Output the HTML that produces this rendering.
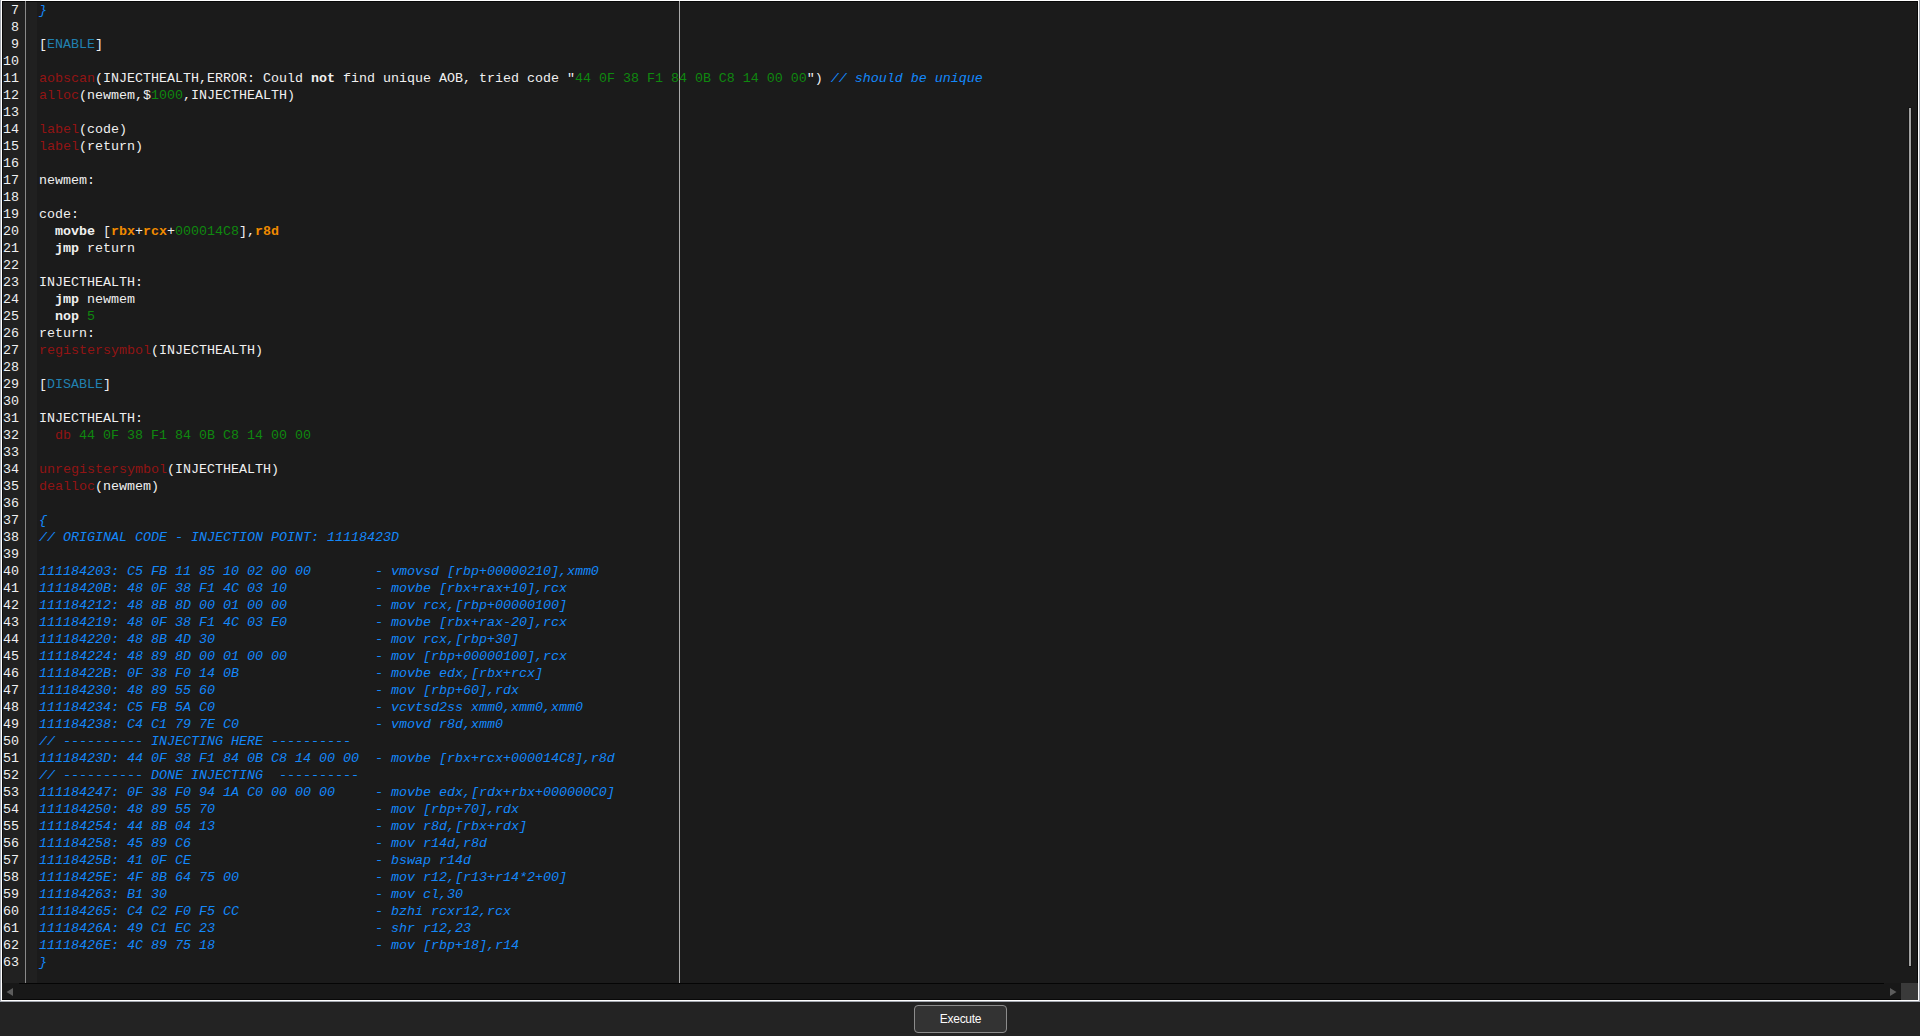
<!DOCTYPE html>
<html><head><meta charset="utf-8">
<style>
html,body{margin:0;padding:0;width:1920px;height:1036px;overflow:hidden;background:#232323;}

pre{margin:0;font-family:"Liberation Mono",monospace;font-size:13.3333px;line-height:17px;white-space:pre;}
#code{position:absolute;left:39px;top:2px;color:#f0f0f0;}
#nums{position:absolute;left:3px;width:16px;top:2px;text-align:right;color:#f0f0f0;}
.k{color:#921414;}
.n{color:#0f880f;}
.r{color:#f08a00;}
.rb{color:#f08a00;font-weight:bold;}
.c{color:#1488fa;font-style:italic;}
.s{color:#2180b0;}
.b{font-weight:bold;}
#btn{position:absolute;left:914px;top:1005px;width:91px;height:26px;border:1px solid #8c8c8c;border-radius:4px;background:#333333;color:#fafafa;font-family:"Liberation Sans",sans-serif;font-size:12px;letter-spacing:-0.3px;line-height:26px;text-align:center;}
</style></head><body>
<div style="position:absolute;left:0;top:0;width:1920px;height:1002px;background:#a3a7af"></div>
<div style="position:absolute;left:1px;top:0;width:1918px;height:1001px;background:#ffffff"></div>
<div style="position:absolute;left:2px;top:1px;width:1916px;height:999px;background:#080808"></div>
<div style="position:absolute;left:0;top:1002px;width:1920px;height:34px;background:#232323"></div>
<div style="position:absolute;left:3px;top:2px;width:22px;height:981px;background:#212121"></div>
<div style="position:absolute;left:25px;top:1px;width:1px;height:982px;background:#8a8a8a"></div>
<div style="position:absolute;left:26px;top:2px;width:11px;height:981px;background:#202020"></div>
<div style="position:absolute;left:37px;top:2px;width:1880px;height:981px;background:#1b1b1b"></div>
<div style="position:absolute;left:679px;top:1px;width:1px;height:982px;background:#ababab"></div>
<pre id="nums">7
8
9
10
11
12
13
14
15
16
17
18
19
20
21
22
23
24
25
26
27
28
29
30
31
32
33
34
35
36
37
38
39
40
41
42
43
44
45
46
47
48
49
50
51
52
53
54
55
56
57
58
59
60
61
62
63</pre>
<pre id="code"><span class="c">}</span>

[<span class="s">ENABLE</span>]

<span class="k">aobscan</span>(INJECTHEALTH,ERROR: Could <span class="b">not</span> find unique AOB, tried code "<span class="n">44 0F 38 F1 84 0B C8 14 00 00</span>") <span class="c">// should be unique</span>
<span class="k">alloc</span>(newmem,$<span class="n">1000</span>,INJECTHEALTH)

<span class="k">label</span>(code)
<span class="k">label</span>(return)

newmem:

code:
  <span class="b">movbe</span> [<span class="rb">rbx</span>+<span class="rb">rcx</span>+<span class="n">000014C8</span>],<span class="rb">r8d</span>
  <span class="b">jmp</span> return

INJECTHEALTH:
  <span class="b">jmp</span> newmem
  <span class="b">nop</span> <span class="n">5</span>
return:
<span class="k">registersymbol</span>(INJECTHEALTH)

[<span class="s">DISABLE</span>]

INJECTHEALTH:
  <span class="k">db</span> <span class="n">44 0F 38 F1 84 0B C8 14 00 00</span>

<span class="k">unregistersymbol</span>(INJECTHEALTH)
<span class="k">dealloc</span>(newmem)

<span class="c">{</span>
<span class="c">// ORIGINAL CODE - INJECTION POINT: 11118423D</span>

<span class="c">111184203: C5 FB 11 85 10 02 00 00        - vmovsd [rbp+00000210],xmm0</span>
<span class="c">11118420B: 48 0F 38 F1 4C 03 10           - movbe [rbx+rax+10],rcx</span>
<span class="c">111184212: 48 8B 8D 00 01 00 00           - mov rcx,[rbp+00000100]</span>
<span class="c">111184219: 48 0F 38 F1 4C 03 E0           - movbe [rbx+rax-20],rcx</span>
<span class="c">111184220: 48 8B 4D 30                    - mov rcx,[rbp+30]</span>
<span class="c">111184224: 48 89 8D 00 01 00 00           - mov [rbp+00000100],rcx</span>
<span class="c">11118422B: 0F 38 F0 14 0B                 - movbe edx,[rbx+rcx]</span>
<span class="c">111184230: 48 89 55 60                    - mov [rbp+60],rdx</span>
<span class="c">111184234: C5 FB 5A C0                    - vcvtsd2ss xmm0,xmm0,xmm0</span>
<span class="c">111184238: C4 C1 79 7E C0                 - vmovd r8d,xmm0</span>
<span class="c">// ---------- INJECTING HERE ----------</span>
<span class="c">11118423D: 44 0F 38 F1 84 0B C8 14 00 00  - movbe [rbx+rcx+000014C8],r8d</span>
<span class="c">// ---------- DONE INJECTING  ----------</span>
<span class="c">111184247: 0F 38 F0 94 1A C0 00 00 00     - movbe edx,[rdx+rbx+000000C0]</span>
<span class="c">111184250: 48 89 55 70                    - mov [rbp+70],rdx</span>
<span class="c">111184254: 44 8B 04 13                    - mov r8d,[rbx+rdx]</span>
<span class="c">111184258: 45 89 C6                       - mov r14d,r8d</span>
<span class="c">11118425B: 41 0F CE                       - bswap r14d</span>
<span class="c">11118425E: 4F 8B 64 75 00                 - mov r12,[r13+r14*2+00]</span>
<span class="c">111184263: B1 30                          - mov cl,30</span>
<span class="c">111184265: C4 C2 F0 F5 CC                 - bzhi rcxr12,rcx</span>
<span class="c">11118426A: 49 C1 EC 23                    - shr r12,23</span>
<span class="c">11118426E: 4C 89 75 18                    - mov [rbp+18],r14</span>
<span class="c">}</span></pre>
<div style="position:absolute;left:2px;top:983px;width:1915px;height:16px;background:#181818"></div>
<div style="position:absolute;left:19px;top:983px;width:1865px;height:1px;background:#050505"></div>
<div style="position:absolute;left:1901px;top:983px;width:17px;height:17px;background:#3a3a3a"></div>
<svg style="position:absolute;left:0;top:980px" width="20" height="20"><polygon points="6.5,12 13,8 13,16" fill="#5c5c5c"/></svg>
<svg style="position:absolute;left:1884px;top:980px" width="20" height="20"><polygon points="12.5,12 6,8 6,16" fill="#5c5c5c"/></svg>
<div style="position:absolute;left:1908px;top:107px;width:4px;height:860px;background:#141414"></div>
<div style="position:absolute;left:1909px;top:108px;width:2px;height:858px;background:#a2a2a2"></div>
<div id="btn">Execute</div>
</body></html>
